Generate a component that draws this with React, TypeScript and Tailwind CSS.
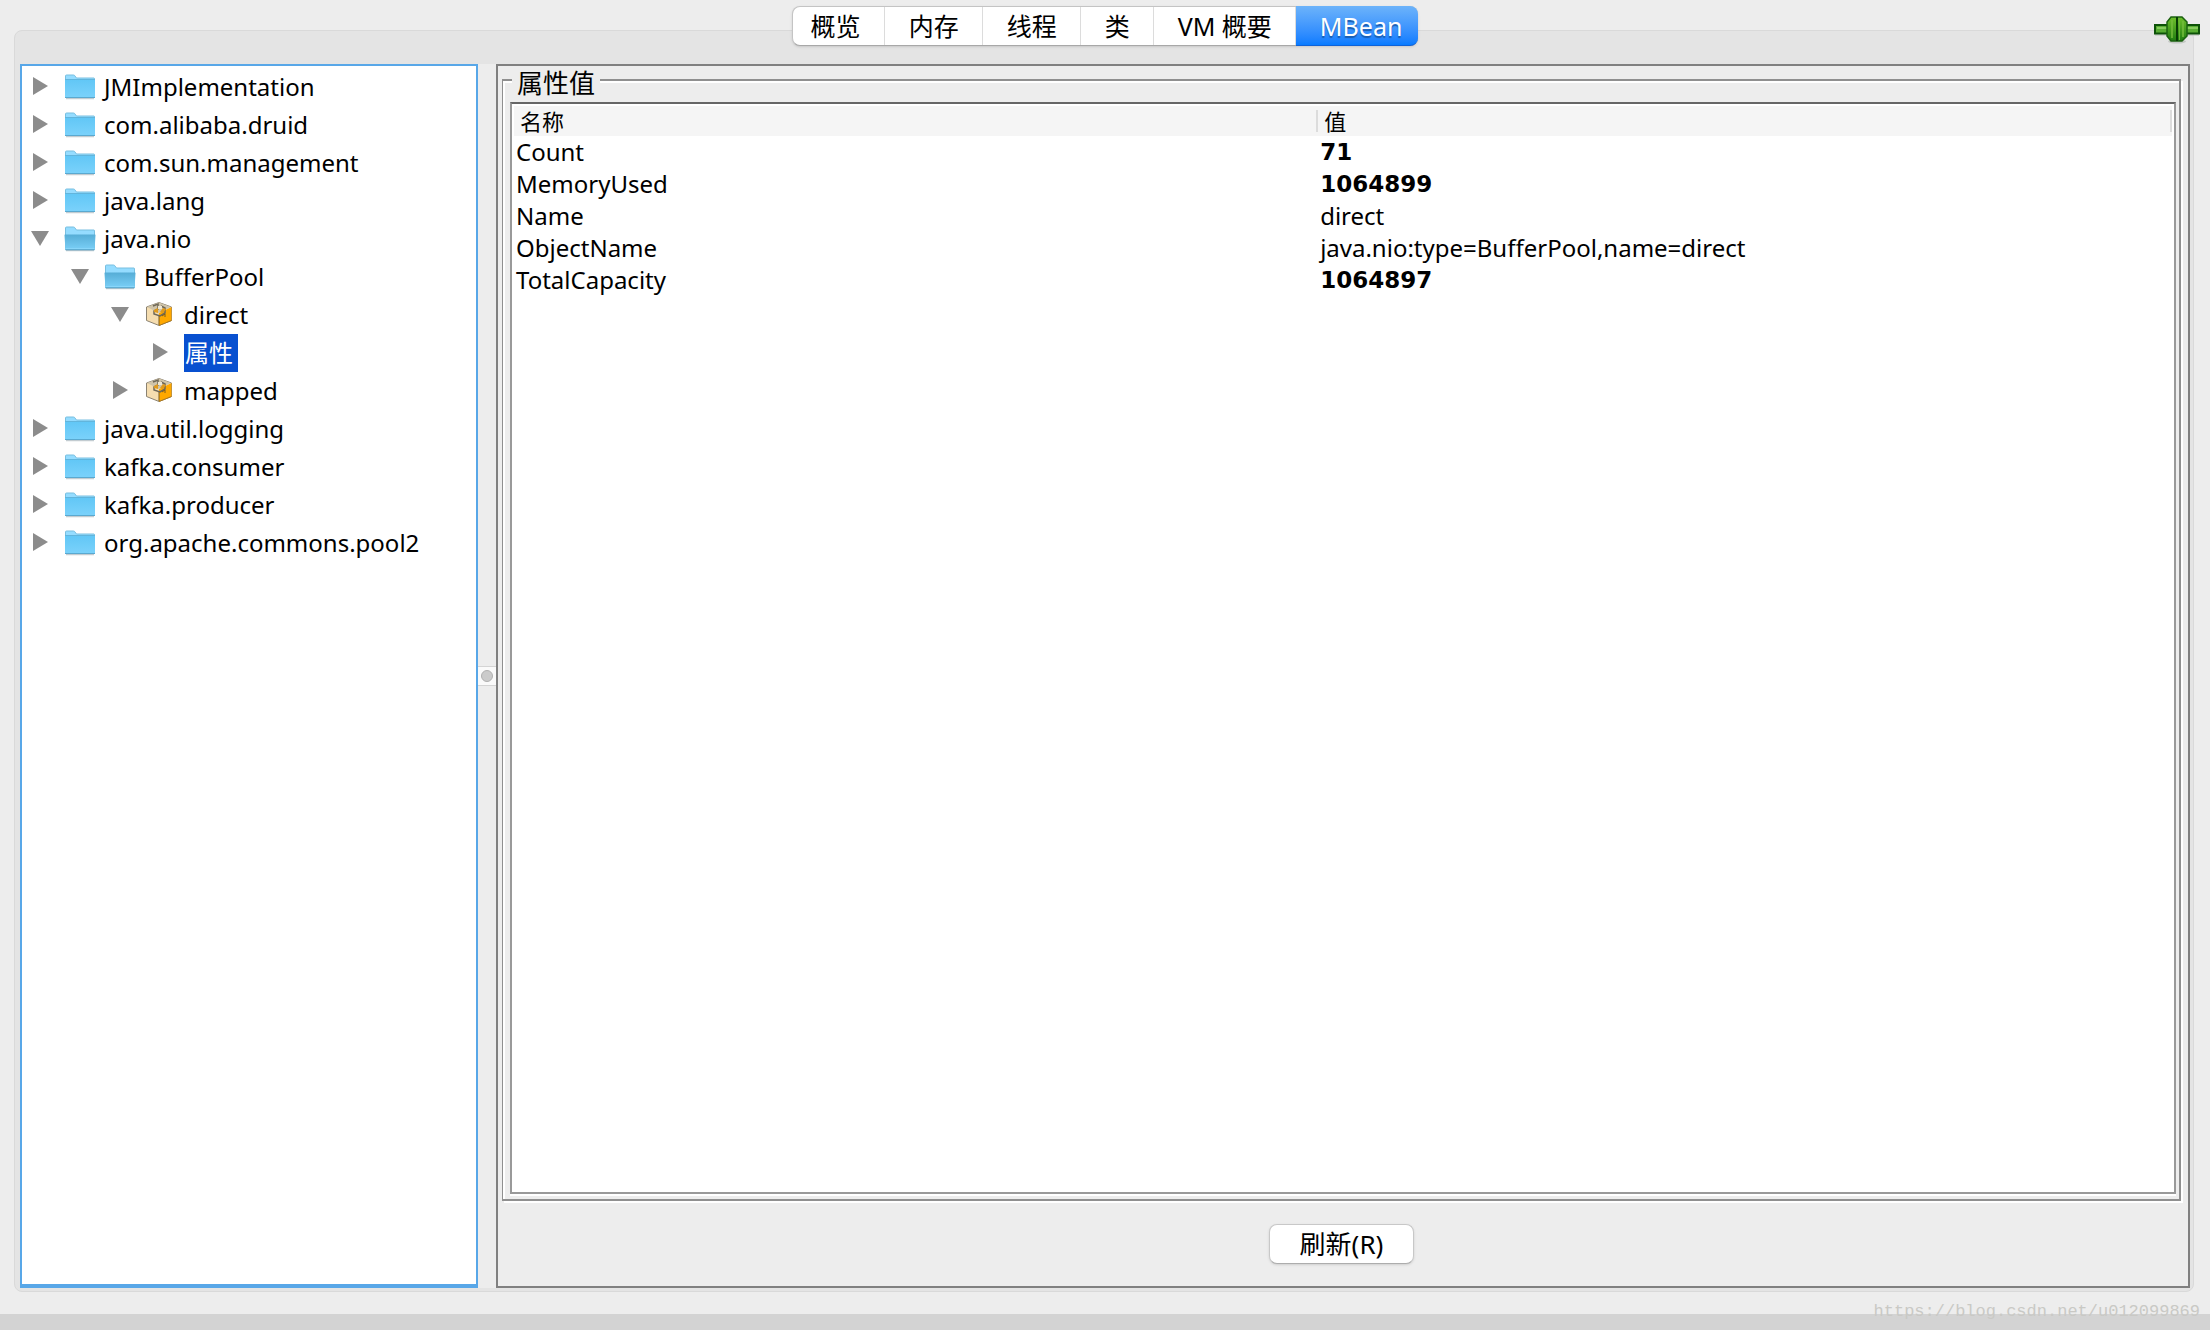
import React from 'react'
import clsx from 'clsx'

type IconKind = 'folder' | 'folder-open' | 'bean' | 'none'

interface TreeItem {
  label: string
  level: number
  icon: IconKind
  open?: boolean
  selected?: boolean
}

interface Attribute {
  name: string
  value: string
  numeric?: boolean
}

const tabs = ['概览', '内存', '线程', '类', 'VM 概要', 'MBean']

const treeItems: TreeItem[] = [
  { label: 'JMImplementation', level: 0, icon: 'folder' },
  { label: 'com.alibaba.druid', level: 0, icon: 'folder' },
  { label: 'com.sun.management', level: 0, icon: 'folder' },
  { label: 'java.lang', level: 0, icon: 'folder' },
  { label: 'java.nio', level: 0, icon: 'folder-open', open: true },
  { label: 'BufferPool', level: 1, icon: 'folder-open', open: true },
  { label: 'direct', level: 2, icon: 'bean', open: true },
  { label: '属性', level: 3, icon: 'none', selected: true },
  { label: 'mapped', level: 2, icon: 'bean' },
  { label: 'java.util.logging', level: 0, icon: 'folder' },
  { label: 'kafka.consumer', level: 0, icon: 'folder' },
  { label: 'kafka.producer', level: 0, icon: 'folder' },
  { label: 'org.apache.commons.pool2', level: 0, icon: 'folder' }
]

const attributes: Attribute[] = [
  { name: 'Count', value: '71', numeric: true },
  { name: 'MemoryUsed', value: '1064899', numeric: true },
  { name: 'Name', value: 'direct' },
  { name: 'ObjectName', value: 'java.nio:type=BufferPool,name=direct' },
  { name: 'TotalCapacity', value: '1064897', numeric: true }
]

const indent = ['pl-[9px]', 'pl-[49px]', 'pl-[89px]', 'pl-[129px]']

const Arrow = ({ open }: { open?: boolean }) => (
  <svg viewBox="0 0 18 18" className="-mt-0.5 size-[18px] shrink-0" aria-hidden="true">
    <path d={open ? 'M0 2H18L9 17Z' : 'M2 0V18L17 9Z'} fill="#8c8c8c" />
  </svg>
)

const Folder = ({ open }: { open?: boolean }) => (
  <svg viewBox="0 0 32 26" className="-mx-px h-[26px] w-8 shrink-0" aria-hidden="true">
    <defs>
      <linearGradient id="folder-front" x1="0" y1="0" x2="0" y2="1">
        <stop offset="0" stopColor="#62c7f6" />
        <stop offset="1" stopColor="#7bd2fb" />
      </linearGradient>
      <linearGradient id="folder-front-open" x1="0" y1="0" x2="0" y2="1">
        <stop offset="0" stopColor="#56add6" />
        <stop offset="1" stopColor="#7bd0f8" />
      </linearGradient>
    </defs>
    <path d="M2 24.5H30" stroke="#c3ccd1" strokeWidth="1.5" />
    <path d="M1.5 2Q1.5 1 2.5 1H9.5Q10.5 1 11 2L12.5 4H30Q30.5 4 30.5 5V23.5H1.5Z" fill="#95dcff" stroke="#79bfe0" strokeWidth="1" />
    {open ? (
      <>
        <path d="M.5 9Q.5 8.500 1 8.500H31Q31.500 8.500 31.500 9L30.500 24H1.500Z" fill="url(#folder-front-open)" />
        <path d="M1.500 22.500H30.500" stroke="#88d6fa" />
        <path d="M1.500 23.800H30.500" stroke="#569fc2" />
      </>
    ) : (
      <>
        <path d="M1 6H31V24H1Z" fill="url(#folder-front)" />
        <path d="M1 5.500H31" stroke="#62b5dc" />
        <path d="M1 23.500H31" stroke="#5aa9d0" />
      </>
    )}
  </svg>
)

const Bean = () => (
  <svg viewBox="0 0 26 24" className="mx-px -mt-0.5 h-6 w-[26px] shrink-0" aria-hidden="true">
    <path d="M13 .5L25.500 5V18.500L13 23.500L.5 18.500V5Z" fill="#f5ddb0" stroke="#8a8272" strokeWidth="1" />
    <path d="M13 11L25.500 5V18.500L13 23.500Z" fill="#ffa800" />
    <path d="M1 5L13 .5L25 5L13 11Z" fill="#cfc4aa" />
    <path d="M7 4L12 2L12 7L8 9V12L14 14L19 11V6L15 4" fill="none" stroke="#6f6858" strokeWidth="1.500" />
    <path d="M8 8L12 6V11L8 10ZM17 6L20 7L17 11L14 10Z" fill="#e09a1c" />
    <path d="M12 4H16V7H12Z" fill="#efe6d0" />
    <path d="M13 14V23M16 14L19 12V15" fill="none" stroke="#7a5c20" strokeWidth="1" />
    <path d="M13 23.500L25.500 18.500" stroke="#a87722" strokeWidth="1" />
  </svg>
)

const Plug = () => (
  <svg viewBox="0 0 46 28" className="h-7 w-[46px]" aria-hidden="true">
    <defs>
      <linearGradient id="plug" x1="0" y1="0" x2="0" y2="1">
        <stop offset="0" stopColor="#6fc02c" />
        <stop offset="1" stopColor="#1f7d10" />
      </linearGradient>
    </defs>
    <ellipse cx="23" cy="25.500" rx="9" ry="2" fill="#c4c8c4" />
    <path d="M1 19H45" stroke="#c4c8c4" strokeWidth="1.500" />
    <rect x="1" y="9" width="44" height="8.500" fill="#58ad33" stroke="#0d5208" strokeWidth="2" />
    <path d="M3 12H44" stroke="#86cc5d" strokeWidth="2" />
    <path d="M17 1H28L33 6V20L28 25H17L13 20V6Z" fill="url(#plug)" stroke="#1b6110" strokeWidth="1.500" />
    <path d="M18 4V22M29 5V21" stroke="#76bd3e" strokeWidth="1.500" />
    <path d="M23 1V25" stroke="#083d05" strokeWidth="2" />
    <path d="M25.500 2V24" stroke="#6cb63a" strokeWidth="1" />
  </svg>
)

const TreeRow: React.FC<TreeItem> = ({ label, level, icon, open, selected }) => (
  <li
    role="treeitem"
    aria-level={level + 1}
    aria-expanded={!!open}
    aria-selected={!!selected}
    className={clsx('flex h-[38px] items-center', indent[level])}
  >
    <Arrow open={open} />
    {icon !== 'none' && (
      <span className="ml-4 flex w-[30px] shrink-0">
        {icon === 'bean' ? <Bean /> : <Folder open={icon === 'folder-open'} />}
      </span>
    )}
    <span
      className={clsx(
        'whitespace-nowrap leading-[38px]',
        icon === 'none' ? 'ml-[15px] pr-[5px] pl-px' : 'ml-[9px]',
        selected && 'bg-[#0850d0] text-white'
      )}
    >
      {label}
    </span>
  </li>
)

const TabBar = () => (
  <div role="tablist" className="flex h-10 rounded-lg border border-[#c4c4c4] border-b-[#a8a8a8] bg-white shadow-sm">
    {tabs.map((tab, i) => {
      const active = tab === 'MBean'
      return (
        <button
          key={tab}
          role="tab"
          aria-selected={active}
          className={clsx(
            'text-[25px] leading-9',
            i === 0 ? 'pl-[18px]' : 'pl-6',
            active
              ? '-my-px -mr-px rounded-r-lg border-b border-[#0f62d8] bg-linear-to-b from-[#6cb3fa] to-[#067bff] pr-4 text-white text-shadow-[0_2px_1px_#1a5db0]'
              : 'border-r border-[#dcdcdc] pr-[23px]'
          )}
        >
          {tab}
        </button>
      )
    })}
  </div>
)

const AttributeTable = () => (
  <table className="w-full table-fixed border-collapse text-left">
    <thead>
      <tr className="h-[30px] bg-[#f5f5f5] text-[22px] leading-[30px]">
        <th className="w-[48.5%] pl-[6px] font-normal">
          <div className="flex items-center justify-between">
            名称
            <span className="h-[22px] w-0.5 bg-[#dcdcdc]" />
          </div>
        </th>
        <th className="pl-[6px] font-normal">
          <div className="flex items-center justify-between">
            值
            <span className="h-[22px] w-0.5 bg-[#dcdcdc]" />
          </div>
        </th>
      </tr>
    </thead>
    <tbody>
      {attributes.map((attr) => (
        <tr key={attr.name} className="h-8 leading-8">
          <td className="pl-[2px]">{attr.name}</td>
          <td className={clsx('pl-[2px]', attr.numeric && "font-['DejaVu_Sans',sans-serif] text-[23px] font-bold")}>
            {attr.value}
          </td>
        </tr>
      ))}
    </tbody>
  </table>
)

export default function App() {
  return (
    <div className="relative flex min-h-screen flex-col bg-[#ededed] pt-1.5 font-['Noto_Sans','Noto_Sans_CJK_SC',sans-serif] text-[24px] text-black">
      <header className="relative z-10 flex justify-center">
        <TabBar />
        <div className="absolute top-[10px] right-[10px]">
          <Plug />
        </div>
      </header>

      <main className="mx-[14px] mr-4 -mt-4 mb-[22px] flex flex-1 flex-col rounded-lg border border-[#d9d9d9] bg-[#e4e4e4] px-[5px] pt-[33px] pb-[3px] pr-[3px]">
        <div className="flex flex-1 bg-[#ededed]">
          <nav className="w-[458px] shrink-0 border-2 border-b-4 border-[#58a7e8] bg-white pt-0.5">
            <ul role="tree">
              {treeItems.map((item) => (
                <TreeRow key={item.label} {...item} />
              ))}
            </ul>
          </nav>

          <div className="flex w-[18px] shrink-0 items-center">
            <div className="flex h-5 w-full items-center justify-center border-y border-[#d4d4d4] bg-[#fafafa]">
              <span className="size-3 rounded-full border border-[#b0b0b0] bg-[#cbcbcb]" />
            </div>
          </div>

          <section className="flex flex-1 flex-col border-2 border-[#808080] pt-[3px] pr-[7px] pl-1">
            <fieldset className="flex min-w-0 flex-1 flex-col border-2 border-l border-[#8f8f8f] pr-[3px] pb-[5px] pl-[7px] shadow-[2px_2px_0_#fff,inset_2px_2px_0_#fff]">
              <legend className="ml-[2px] h-[22px] bg-[#ededed] px-[5px] text-[26px] leading-7">属性值</legend>
              <div className="mt-[11px] flex-1 border-2 border-t-[#666] border-[#999] bg-white p-0.5 shadow-[0_2px_0_#fff]">
                <AttributeTable />
              </div>
            </fieldset>
            <div className="flex h-[85px] items-center justify-center">
              <button className="h-10 rounded-lg border border-[#c8c8c8] border-b-[#adadad] bg-white px-[30px] text-[26px] leading-9 shadow-sm">
                刷新(R)
              </button>
            </div>
          </section>
        </div>
      </main>

      <div className="h-4 bg-[#d3d3d3]" />
      <span className="absolute right-[10px] bottom-1.5 font-['Liberation_Mono',monospace] text-[17px] leading-6 text-[#c9c9c5]">
        https://blog.csdn.net/u012099869
      </span>
    </div>
  )
}
